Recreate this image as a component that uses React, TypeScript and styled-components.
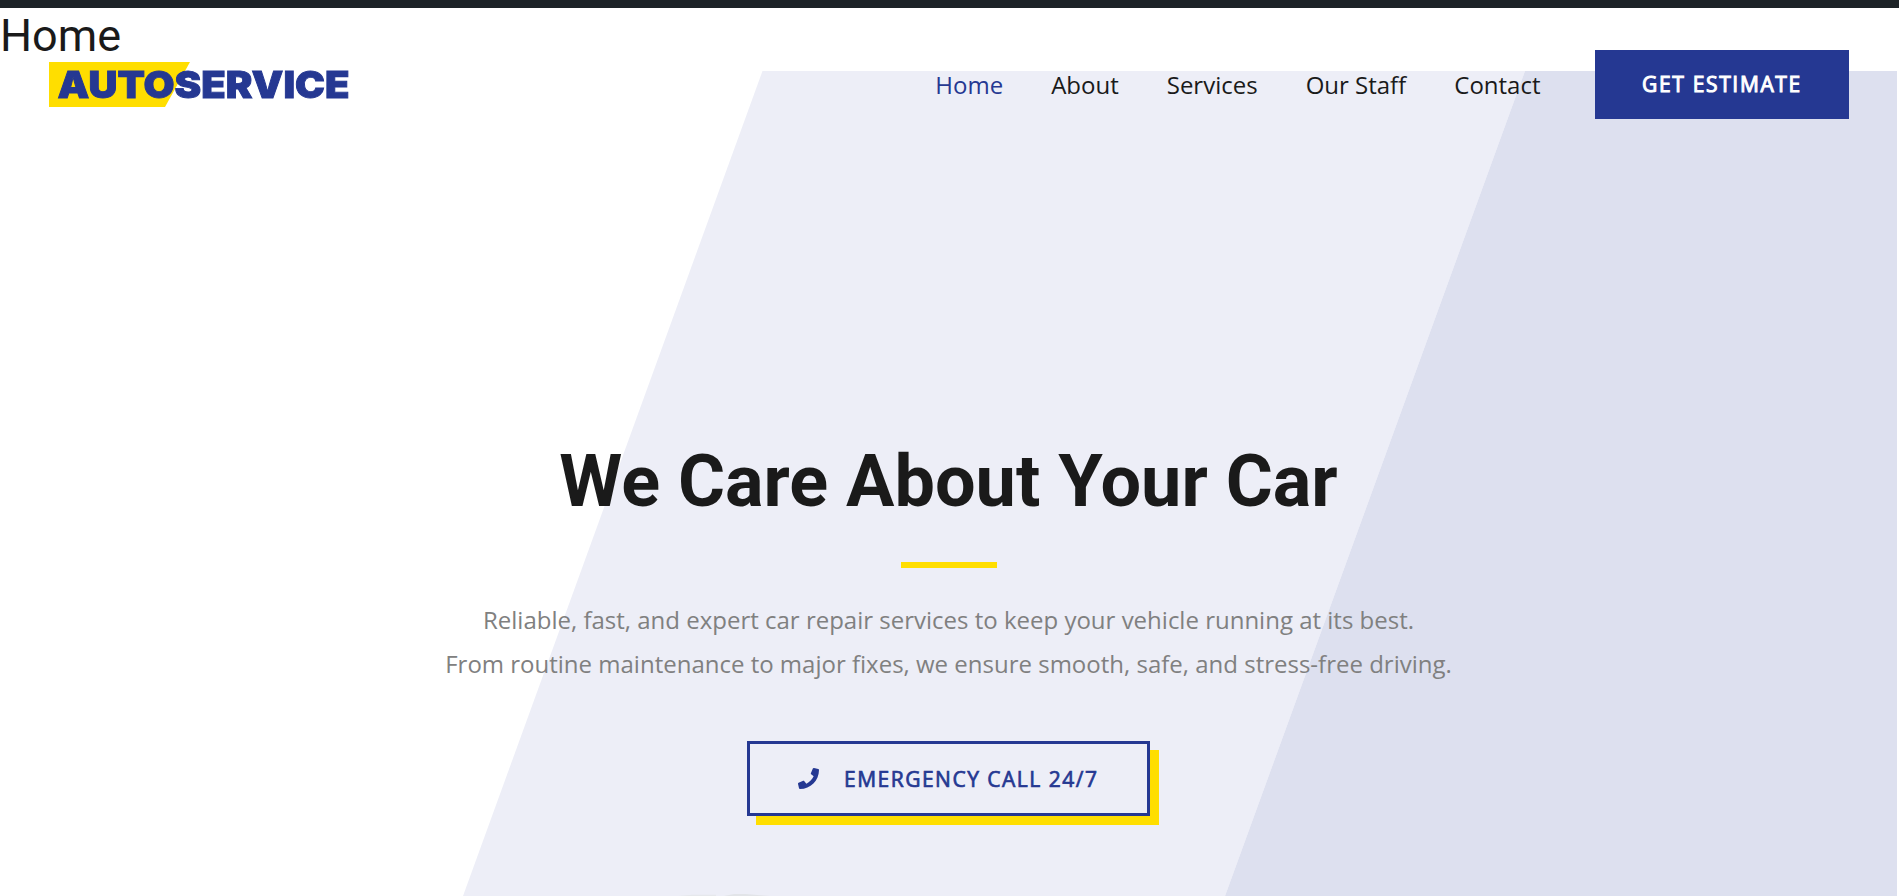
import React from "react";
import styled, { createGlobalStyle, css } from "styled-components";
import { FaPhone } from "react-icons/fa";

const GlobalStyle = createGlobalStyle`
  :root {
    --blue: #253892;
    --yellow: #ffde00;
    --dark: #1a1a1a;
    --text: #808080;
  }

  * {
    box-sizing: border-box;
  }

  body {
    margin: 0;
    background: #fff;
    font-family: "Open Sans", sans-serif;
    overflow: hidden;
  }
`;

const label = css`
  font-family: "Open Sans", sans-serif;
  font-size: 21px;
  font-weight: 400;
  text-transform: uppercase;
  white-space: nowrap;
  cursor: pointer;
`;

const Page = styled.div`
  height: 896px;
  display: flex;
  flex-direction: column;
  border-top: 8px solid #1d2327;
`;

const PageTitle = styled.h1`
  margin: 0;
  height: 63px;
  padding-top: 1px;
  font-family: Roboto, sans-serif;
  font-size: 45px;
  font-weight: 400;
  line-height: 54px;
  color: var(--dark);
`;

const Hero = styled.section`
  position: relative;
  flex: 1;
  width: 1897px;
  display: flex;
  flex-direction: column;
`;

const Stripe = styled.div<{ $shape: string; $color: string }>`
  position: absolute;
  inset: 0;
  z-index: -1;
  background: ${({ $color }) => $color};
  clip-path: polygon(${({ $shape }) => $shape});
`;

const Header = styled.header`
  height: 69px;
  margin-top: -21px;
  padding: 0 48px 0 49px;
  display: flex;
  align-items: center;
`;

const Logo = styled.svg`
  width: 300px;
  height: 46px;
  display: block;
`;

const Nav = styled.nav`
  margin-left: auto;
  margin-right: 54.5px;
  display: flex;
  gap: 48px;
`;

const NavLink = styled.a<{ $active?: boolean }>`
  font-size: 24px;
  line-height: 36px;
  color: ${({ $active }) => ($active ? "var(--blue)" : "var(--dark)")};
`;

const EstimateButton = styled.button`
  ${label}
  width: 254px;
  height: 69px;
  padding: 0 0 1px;
  border: none;
  background: var(--blue);
  color: #fff;
  letter-spacing: 1.65px;
  -webkit-text-stroke: 1px currentColor;
`;

const Content = styled.div`
  padding-top: 316px;
  display: flex;
  flex-direction: column;
  align-items: center;
`;

const Heading = styled.h2`
  margin: 0;
  font-family: Roboto, sans-serif;
  font-size: 72px;
  font-weight: 700;
  line-height: 94px;
  color: var(--dark);
`;

const Divider = styled.div`
  width: 96px;
  height: 6px;
  margin-top: 33px;
  background: var(--yellow);
`;

const Lead = styled.p`
  margin: 30px 0 0;
  font-size: 24px;
  line-height: 44px;
  text-align: center;
  color: var(--text);
`;

const CallButton = styled.button`
  ${label}
  width: 403px;
  height: 75px;
  margin-top: 55px;
  padding: 0 0 0 48px;
  display: flex;
  align-items: center;
  gap: 25px;
  border: 3px solid var(--blue);
  background: #edeef7;
  box-shadow: 9px 9px 0 var(--yellow);
  color: var(--blue);
  letter-spacing: 1.5px;
  -webkit-text-stroke: 0.7px currentColor;

  svg {
    width: 21px;
    height: 21px;
  }
`;

// top of the car, just peeking in at the fold
const CarRoof = styled.svg`
  width: 110px;
  height: 3px;
  margin: auto 0 0 670px;
  display: block;
  filter: blur(0.6px);
`;

const links = ["Home", "About", "Services", "Our Staff", "Contact"];

const App = () => {
  return (
    <>
      <GlobalStyle />
      <Page>
        <PageTitle>Home</PageTitle>
        <Hero>
          <Stripe
            $color="#edeef7"
            $shape="762.5px 0, 1525px 0, 1225px 100%, 463px 100%"
          />
          <Stripe
            $color="#dde0ef"
            $shape="1525px 0, 100% 0, 100% 100%, 1225px 100%"
          />
          <Header>
            <Logo viewBox="0 0 300 46">
              <polygon points="0,0 141,0 116,45 0,45" fill="#ffde00" />
              <text
                x="8.5"
                y="35.7"
                textLength="292"
                lengthAdjust="spacingAndGlyphs"
                fontFamily="Inter, sans-serif"
                fontSize="37"
                fontWeight="900"
                fill="#253892"
                stroke="#253892"
                strokeWidth="0.9"
                style={{ filter: "blur(0.6px)" }}
              >
                AUTOSERVICE
              </text>
            </Logo>
            <Nav>
              {links.map((link, i) => (
                <NavLink key={link} $active={i === 0}>
                  {link}
                </NavLink>
              ))}
            </Nav>
            <EstimateButton>Get Estimate</EstimateButton>
          </Header>
          <Content>
            <Heading>We Care About Your Car</Heading>
            <Divider />
            <Lead>
              Reliable, fast, and expert car repair services to keep your
              vehicle running at its best.
              <br />
              From routine maintenance to major fixes, we ensure smooth, safe,
              and stress-free driving.
            </Lead>
            <CallButton>
              <FaPhone />
              Emergency Call 24/7
            </CallButton>
          </Content>
          <CarRoof viewBox="0 0 110 3">
            <path d="M8 3 L22 1.8 H46 V3 Z" fill="#e6e8ec" />
            <path d="M54 3 L64 1 H76 L100 3 Z" fill="#e2e4e8" />
          </CarRoof>
        </Hero>
      </Page>
    </>
  );
};

export default App;
